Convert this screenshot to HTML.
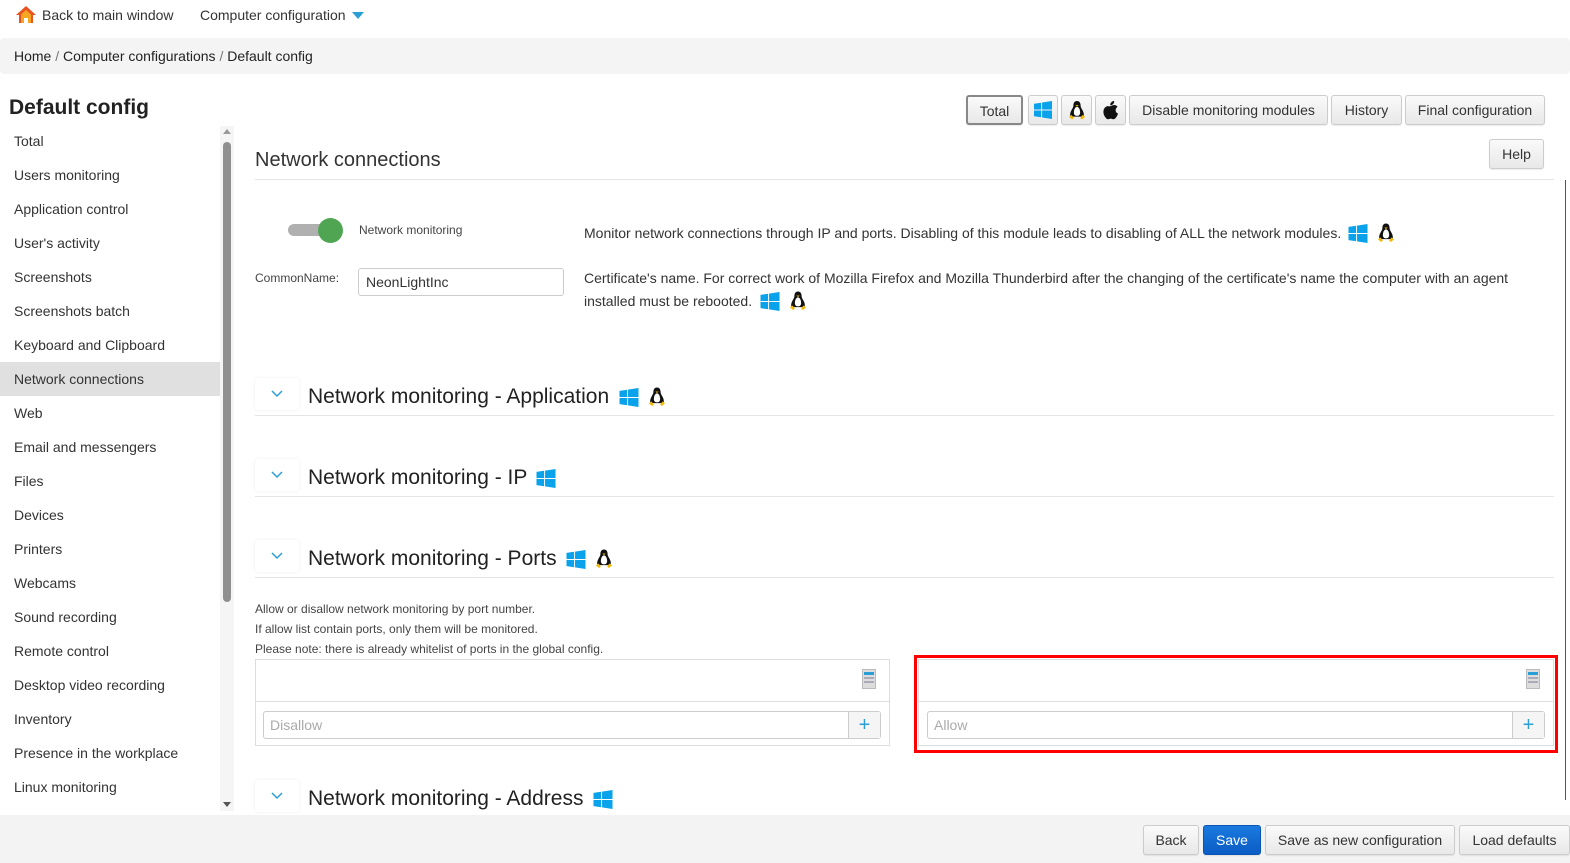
<!DOCTYPE html>
<html><head><meta charset="utf-8">
<style>
*{box-sizing:border-box;margin:0;padding:0}
body{width:1570px;height:863px;overflow:hidden;background:#fff;font-family:"Liberation Sans",Arial,sans-serif;color:#333;position:relative}
.a{position:absolute;white-space:nowrap}
.btn{position:absolute;height:30px;border:1px solid #ccc;border-radius:3px;background:linear-gradient(#fafafa,#e8e8e8);font-size:14px;color:#333;text-align:center;line-height:28px;box-shadow:0 1px 1px rgba(0,0,0,.08)}
.side{position:absolute;left:0;width:220px;height:34px;font-size:14px;line-height:34px;padding-left:14px;color:#333}
.sec{position:absolute;left:255px;width:1299px;height:42px;border-bottom:1px solid #e5e5e5}
.chev{position:absolute;left:0;top:4px;width:44px;height:32px;border-radius:3px;box-shadow:0 0 3px rgba(0,0,0,.08)}
.sec .t{position:absolute;left:53px;top:11px;font-size:21px;color:#222}
.sm{font-size:12px;color:#444}
.box{position:absolute;border:1px solid #ddd}
.inp{position:absolute;border:1px solid #ccc;border-radius:3px;background:#fff;font-size:14px;color:#aaa;padding-left:6px;line-height:26px}
.plus{position:absolute;right:0;top:0;width:32px;height:26px;background:#f5f5f5;border-left:1px solid #ccc;color:#2a9fd6;font-size:20px;text-align:center;line-height:26px}
</style></head><body>
<svg width="0" height="0" style="position:absolute"><defs>
<symbol id="win" viewBox="0 0 20 20"><path fill="#0aa2ea" d="M0 3l8-1.1v7.6H0zM9 1.7L20 0v9.5H9zM0 10.5h8v7.6L0 17zM9 10.5h11V20L9 18.3z"/></symbol>
<symbol id="tux" viewBox="0 0 20 22"><path fill="#111" d="M10 1c-3 0-4 2.5-4 5 0 2-1 3-2.5 6-1.2 2.5-1.5 5-.5 6 1 .5 3 .3 7 .3s6 .2 7-.3c1-1 .7-3.5-.5-6C15 9 14 8 14 6c0-2.5-1-5-4-5z"/><path fill="#fff" d="M10 7.5c-2 0-3.3 2.8-3.5 6 0 2.6 1 4 3.5 4s3.5-1.4 3.5-4C13.3 10.3 12 7.5 10 7.5z"/><path fill="#f5b800" d="M8.2 5.5h3.6L10 7.3zM1 18.5l3-2 2.5 3.5-2 1.5zM19 18.5l-3-2-2.5 3.5 2 1.5z"/></symbol>
<symbol id="apple" viewBox="0 0 20 22"><path fill="#111" d="M13.5 1c.2 1.5-.5 3-1.5 3.8-1 .8-2.1 1-2.8.9-.2-1.4.5-2.8 1.4-3.6C11.5 1.3 12.7 1 13.5 1zM10 6.3c1.2 0 2.2-.8 3.6-.8 1.4 0 2.8.7 3.7 2-3.2 1.8-2.7 6.3.6 7.5-.6 1.6-1.3 3-2.3 4.4-.9 1.2-1.8 1.9-2.9 1.9-1.2 0-1.6-.7-3-.7s-1.9.7-3 .7c-1.2 0-2-.9-2.9-2.1C1.5 16.4 1 12.3 2.3 9.7 3.2 8 4.8 6.7 6.5 6.7c1.3 0 2.3.8 3.5-.4z"/></symbol>
</defs></svg>

<svg class="a" style="left:16px;top:5px" width="20" height="19" viewBox="0 0 20 19"><path fill="#e8531f" d="M10 1L0 10h3v8h5v-5h4v5h5v-8h3z"/><path fill="#f5a623" d="M10 5l-5 4.5V18h3v-5h4v5h3V9.5z"/></svg>
<div class="a" style="left:42px;top:7px;font-size:14px">Back to main window</div>
<div class="a" style="left:200px;top:7px;font-size:14px">Computer configuration</div>
<div class="a" style="left:352px;top:12px;width:0;height:0;border-left:6px solid transparent;border-right:6px solid transparent;border-top:7px solid #2a9fd6"></div>
<div class="a" style="left:0;top:38px;width:1570px;height:36px;background:#f4f4f4;border-radius:4px"></div>
<div class="a" style="left:14px;top:48px;font-size:14px;color:#222">Home <span style="color:#777">/</span> Computer configurations <span style="color:#777">/</span> Default config</div>
<div class="a" style="left:9px;top:96px;font-size:21px;font-weight:bold;color:#222">Default config</div>

<div class="side" style="top:124px">Total</div>
<div class="side" style="top:158px">Users monitoring</div>
<div class="side" style="top:192px">Application control</div>
<div class="side" style="top:226px">User's activity</div>
<div class="side" style="top:260px">Screenshots</div>
<div class="side" style="top:294px">Screenshots batch</div>
<div class="side" style="top:328px">Keyboard and Clipboard</div>
<div class="side" style="top:362px;background:#e0e0e0">Network connections</div>
<div class="side" style="top:396px">Web</div>
<div class="side" style="top:430px">Email and messengers</div>
<div class="side" style="top:464px">Files</div>
<div class="side" style="top:498px">Devices</div>
<div class="side" style="top:532px">Printers</div>
<div class="side" style="top:566px">Webcams</div>
<div class="side" style="top:600px">Sound recording</div>
<div class="side" style="top:634px">Remote control</div>
<div class="side" style="top:668px">Desktop video recording</div>
<div class="side" style="top:702px">Inventory</div>
<div class="side" style="top:736px">Presence in the workplace</div>
<div class="side" style="top:770px">Linux monitoring</div>
<div class="a" style="left:220px;top:126px;width:14px;height:685px;background:#f5f5f5"></div>
<div class="a" style="left:223px;top:129px;width:0;height:0;border-left:4px solid transparent;border-right:4px solid transparent;border-bottom:5px solid #999"></div>
<div class="a" style="left:223px;top:142px;width:8px;height:460px;background:#909090;border-radius:4px"></div>
<div class="a" style="left:223px;top:802px;width:0;height:0;border-left:4px solid transparent;border-right:4px solid transparent;border-top:5px solid #555"></div>

<div class="btn" style="left:966px;top:95px;width:57px;border:2px solid #888">Total</div>
<div class="btn" style="left:1028px;top:95px;width:30px"><svg style="margin-top:5px" width="18" height="18"><use href="#win"/></svg></div>
<div class="btn" style="left:1061px;top:95px;width:31px"><svg style="margin-top:4px" width="18" height="20"><use href="#tux"/></svg></div>
<div class="btn" style="left:1095px;top:95px;width:31px"><svg style="margin-top:4px" width="18" height="20"><use href="#apple"/></svg></div>
<div class="btn" style="left:1129px;top:95px;width:199px">Disable monitoring modules</div>
<div class="btn" style="left:1331px;top:95px;width:71px">History</div>
<div class="btn" style="left:1405px;top:95px;width:140px">Final configuration</div>
<div class="btn" style="left:1489px;top:139px;width:55px">Help</div>

<div class="a" style="left:255px;top:149px;font-size:20px;color:#333">Network connections</div>
<div class="a" style="left:255px;top:179px;width:1299px;height:1px;background:#e5e5e5"></div>
<div class="a" style="left:1565px;top:180px;width:1px;height:620px;background:#555"></div>

<div class="a" style="left:288px;top:224px;width:46px;height:12px;border-radius:6px;background:#b0b0b0"></div>
<div class="a" style="left:318px;top:218px;width:25px;height:25px;border-radius:50%;background:#4fa552"></div>
<div class="a sm" style="left:359px;top:223px">Network monitoring</div>
<div class="a" style="left:584px;top:225px;font-size:14px">Monitor network connections through IP and ports. Disabling of this module leads to disabling of ALL the network modules.</div>
<svg class="a" style="left:1348px;top:224px" width="20" height="19"><use href="#win"/></svg>
<svg class="a" style="left:1377px;top:222px" width="18" height="21"><use href="#tux"/></svg>

<div class="a sm" style="left:255px;top:271px">CommonName:</div>
<div class="a" style="left:358px;top:268px;width:206px;height:28px;border:1px solid #ccc;border-radius:3px;font-size:14px;color:#333;padding-left:7px;line-height:26px">NeonLightInc</div>
<div class="a" style="left:584px;top:267px;font-size:14px;line-height:23px;white-space:normal;width:960px">Certificate's name. For correct work of Mozilla Firefox and Mozilla Thunderbird after the changing of the certificate's name the computer with an agent installed must be rebooted.</div>
<svg class="a" style="left:760px;top:292px" width="20" height="19"><use href="#win"/></svg>
<svg class="a" style="left:789px;top:290px" width="18" height="21"><use href="#tux"/></svg>

<div class="sec" style="top:374px"><div class="chev"><svg style="position:absolute;left:16px;top:12px" width="12" height="8"><path d="M1 1l5 5 5-5" stroke="#2a9fd6" stroke-width="1.5" fill="none"/></svg></div><div class="t">Network monitoring - Application</div>
<svg style="position:absolute;left:364px;top:14px" width="20" height="19"><use href="#win"/></svg><svg style="position:absolute;left:393px;top:12px" width="18" height="21"><use href="#tux"/></svg></div>
<div class="sec" style="top:455px"><div class="chev"><svg style="position:absolute;left:16px;top:12px" width="12" height="8"><path d="M1 1l5 5 5-5" stroke="#2a9fd6" stroke-width="1.5" fill="none"/></svg></div><div class="t">Network monitoring - IP</div>
<svg style="position:absolute;left:281px;top:14px" width="20" height="19"><use href="#win"/></svg></div>
<div class="sec" style="top:536px"><div class="chev"><svg style="position:absolute;left:16px;top:12px" width="12" height="8"><path d="M1 1l5 5 5-5" stroke="#2a9fd6" stroke-width="1.5" fill="none"/></svg></div><div class="t">Network monitoring - Ports</div>
<svg style="position:absolute;left:311px;top:14px" width="20" height="19"><use href="#win"/></svg><svg style="position:absolute;left:340px;top:12px" width="18" height="21"><use href="#tux"/></svg></div>

<div class="a sm" style="left:255px;top:599px;line-height:20px">Allow or disallow network monitoring by port number.<br>If allow list contain ports, only them will be monitored.<br>Please note: there is already whitelist of ports in the global config.</div>

<div class="box" style="left:255px;top:659px;width:635px;height:87px"></div>
<div class="a" style="left:255px;top:701px;width:635px;height:1px;background:#ddd"></div>
<div class="a" style="left:862px;top:669px;width:14px;height:20px;background:#ddd;border:1px solid #bbb"><div style="margin:2px 1px;height:3px;background:#2a9fd6"></div><div style="margin:2px 1px;height:2px;background:#aab"></div><div style="margin:2px 1px;height:2px;background:#aab"></div></div>
<div class="inp" style="left:263px;top:711px;width:618px;height:28px">Disallow<div class="plus">+</div></div>

<div class="a" style="left:914px;top:655px;width:644px;height:98px;border:3px solid #f00"></div>
<div class="box" style="left:918px;top:659px;width:636px;height:87px"></div>
<div class="a" style="left:918px;top:701px;width:636px;height:1px;background:#ddd"></div>
<div class="a" style="left:1526px;top:669px;width:14px;height:20px;background:#ddd;border:1px solid #bbb"><div style="margin:2px 1px;height:3px;background:#2a9fd6"></div><div style="margin:2px 1px;height:2px;background:#aab"></div><div style="margin:2px 1px;height:2px;background:#aab"></div></div>
<div class="inp" style="left:927px;top:711px;width:618px;height:28px">Allow<div class="plus">+</div></div>

<div class="sec" style="top:776px;border:none"><div class="chev"><svg style="position:absolute;left:16px;top:12px" width="12" height="8"><path d="M1 1l5 5 5-5" stroke="#2a9fd6" stroke-width="1.5" fill="none"/></svg></div><div class="t">Network monitoring - Address</div>
<svg style="position:absolute;left:338px;top:14px" width="20" height="19"><use href="#win"/></svg></div>

<div class="a" style="left:0;top:815px;width:1570px;height:48px;background:#f3f3f3"></div>
<div class="btn" style="left:1143px;top:825px;width:56px">Back</div>
<div class="btn" style="left:1203px;top:825px;width:58px;background:linear-gradient(#1a7ae0,#0b5cc4);border-color:#0a55b5;color:#fff">Save</div>
<div class="btn" style="left:1265px;top:825px;width:190px">Save as new configuration</div>
<div class="btn" style="left:1459px;top:825px;width:111px">Load defaults</div>
</body></html>
